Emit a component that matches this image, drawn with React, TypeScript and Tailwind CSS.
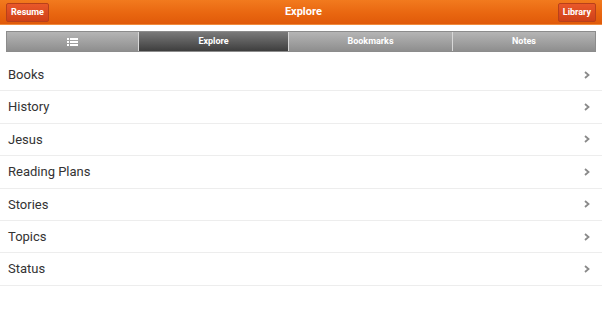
const rows = ["Books", "History", "Jesus", "Reading Plans", "Stories", "Topics", "Status"];

const App = () => {
  return (
    <div className="w-[602px] h-[310px] bg-white font-['Roboto',sans-serif] overflow-hidden">
      {/* Header */}
      <header className="h-[25px] flex items-center justify-between px-[6px] bg-[linear-gradient(180deg,#f27a1e_0%,#e8650f_60%,#e05a0a_100%)] border-b border-[#f08a3c]">
        <button className="h-[19px] px-[4px] rounded-[2px] bg-[linear-gradient(180deg,#e9582a,#cf4118)] border border-[#b9401a] text-white text-[9px] font-bold leading-none">
          Resume
        </button>
        <h1 className="text-white text-[11px] font-bold">Explore</h1>
        <button className="h-[19px] px-[4px] rounded-[2px] bg-[linear-gradient(180deg,#e9582a,#cf4118)] border border-[#b9401a] text-white text-[9px] font-bold leading-none">
          Library
        </button>
      </header>

      {/* Tabs */}
      <div className="mx-[6px] mt-[6px] h-[21px] flex border border-[#8c8c8c] text-white text-[9px] font-bold">
        <div className="w-[132px] flex items-center justify-center bg-[linear-gradient(180deg,#b5b5b5,#8e8e8e)] border-r border-[#d8d8d8]">
          <svg width="11" height="8" viewBox="0 0 11 8" fill="white">
            <rect x="0" y="0" width="2" height="2" />
            <rect x="3" y="0" width="8" height="2" />
            <rect x="0" y="3" width="2" height="2" />
            <rect x="3" y="3" width="8" height="2" />
            <rect x="0" y="6" width="2" height="2" />
            <rect x="3" y="6" width="8" height="2" />
          </svg>
        </div>
        <div className="w-[150px] flex items-center justify-center bg-[linear-gradient(180deg,#7a7a7a,#3e3e3e)] border-r border-[#d8d8d8]">
          Explore
        </div>
        <div className="w-[164px] flex items-center justify-center bg-[linear-gradient(180deg,#b5b5b5,#8e8e8e)] border-r border-[#d8d8d8]">
          Bookmarks
        </div>
        <div className="flex-1 flex items-center justify-center bg-[linear-gradient(180deg,#b5b5b5,#8e8e8e)]">
          Notes
        </div>
      </div>

      {/* List */}
      <ul className="mt-[7px]">
        {rows.map((r) => (
          <li key={r} className="h-[32.4px] flex items-center justify-between pl-[8px] pr-[12px] border-b border-[#ededed]">
            <span className="text-[13px] text-[#333333]">{r}</span>
            <svg width="6" height="8" viewBox="0 0 6 8">
              <path d="M1 1 L4.5 4 L1 7" stroke="#8a8a8a" strokeWidth="1.8" fill="none" />
            </svg>
          </li>
        ))}
      </ul>
    </div>
  );
};

export default App;
